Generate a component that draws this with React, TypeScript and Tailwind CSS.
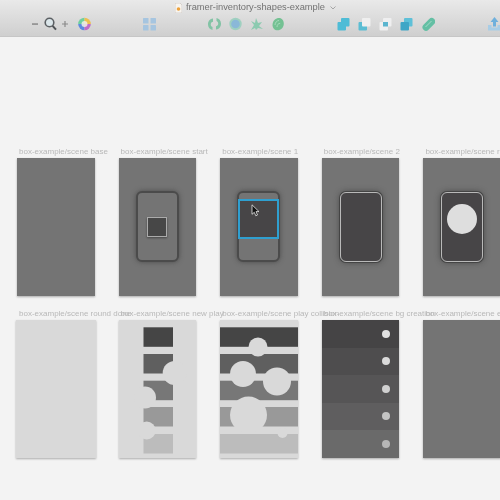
import React from "react";

const Icon = ({ w, ml, children }: { w: number; ml: number; children: React.ReactNode }) => (
  <svg width={w} height={14} viewBox={`0 0 ${w} 14`} style={{ marginLeft: ml }} className="shrink-0">
    {children}
  </svg>
);

const Stack = ({ a, b, front }: { a: string; b: string; front: "a" | "b" }) => {
  const A = <rect x="0.5" y="5" width="8.5" height="8.5" rx="1" fill={a} />;
  const B = <rect x="4" y="1" width="8.5" height="8.5" rx="1" fill={b} />;
  return front === "a" ? <>{B}{A}</> : <>{A}{B}</>;
};

function Toolbar() {
  return (
    <div className="h-[37px] border-b border-[#c6c6c6] bg-gradient-to-b from-[#e9e9e9] to-[#cfcfcf] flex flex-col shrink-0">
      <div className="h-[15px] pl-[175px] flex items-center gap-[4px] text-[9.3px] text-[#737373]">
        <svg width="7" height="10" viewBox="0 0 7 10" className="shrink-0">
          <path d="M0 0h5l2 2v8H0z" fill="#f7f4ef" stroke="#c4beb8" strokeWidth="0.6" />
          <circle cx="3.5" cy="6" r="1.8" fill="#eda23c" />
        </svg>
        <span className="whitespace-nowrap">framer-inventory-shapes-example</span>
        <svg width="6" height="4" viewBox="0 0 6 4" className="ml-[1px]">
          <path d="M0.5 0.5 3 3l2.5-2.5" fill="none" stroke="#a5a5a5" />
        </svg>
      </div>
      <div className="h-[17px] flex items-center">
        <Icon w={6} ml={32}><rect x="0" y="6.4" width="6" height="1.3" fill="#7c7c7c" /></Icon>
        <Icon w={13} ml={6}>
          <circle cx="5.5" cy="5.5" r="4.3" fill="#dbe6ea" stroke="#5c6064" strokeWidth="1.6" />
          <path d="M8.6 8.8 12 12.6" stroke="#4f5356" strokeWidth="2" />
        </Icon>
        <Icon w={6} ml={5}><path d="M0 7h6M3 4v6" stroke="#8a8a8a" strokeWidth="1.2" /></Icon>
        <Icon w={13} ml={10}>
          <path d="M6.5 7 L6.5 .7 A6.3 6.3 0 0 0 .2 7z" fill="#6fd0a0" />
          <path d="M6.5 7 L.2 7 A6.3 6.3 0 0 0 6.5 13.3z" fill="#5e8ae0" />
          <path d="M6.5 7 L6.5 13.3 A6.3 6.3 0 0 0 12.8 7z" fill="#c06cc8" />
          <path d="M6.5 7 L12.8 7 A6.3 6.3 0 0 0 6.5 .7z" fill="#eec050" />
          <circle cx="6.5" cy="7" r="3" fill="#f1efe7" opacity=".85" />
        </Icon>
        <Icon w={13} ml={52}>
          <rect x="0" y="1" width="5.5" height="5.5" rx=".6" fill="#a6c5e0" />
          <rect x="7.5" y="1" width="5.5" height="5.5" rx=".6" fill="#a6c5e0" />
          <rect x="0" y="8" width="5.5" height="5.5" rx=".6" fill="#a6c5e0" />
          <rect x="7.5" y="8" width="5.5" height="5.5" rx=".6" fill="#a6c5e0" />
        </Icon>
        <Icon w={15} ml={51}>
          <path d="M6 1.5C2 2 1 5 1 7.5c0 3 2 5 4.5 5.5V10C4.2 9.5 3.6 8.500 3.800 7 4 5.500 5 5 6 4.800z" fill="#82c3a5" />
          <path d="M9 12.500c4-.5 5-3.500 5-6 0-3-2-5-4.500-5.500V4c1.300.5 1.900 1.500 1.700 3-.2 1.500-1.200 2-2.200 2.200z" fill="#82c3a5" />
        </Icon>
        <Icon w={13} ml={7}>
          <circle cx="6.500" cy="7" r="6.200" fill="#9fd0c0" />
          <circle cx="6.500" cy="7" r="4.300" fill="#8ab8d8" />
        </Icon>
        <Icon w={13} ml={8}>
          <path d="M1 13 4 8 1 4l4 2 1-5 2 5 4-1-3 4 4 3-5-1-2 2-1-2z" fill="#8ccab0" />
        </Icon>
        <Icon w={12} ml={9}>
          <path d="M.5 8C.5 3.500 4 1 7 1c3 0 4.800 2.500 4.800 5.500 0 4-3 6.800-6.300 6.800C2.500 13.300.5 11 .5 8z" fill="#74c193" />
          <path d="M3 8c0-2.500 2-4.500 4-4.500M5 10c0-2 1.200-3.700 3.200-3.700" fill="none" stroke="#a6dcbc" strokeWidth="1" />
        </Icon>
        <Icon w={13} ml={53}><Stack a="#4fbcd6" b="#4fbcd6" front="a" /></Icon>
        <Icon w={13} ml={8}><Stack a="#5bbdd3" b="#efefef" front="b" /></Icon>
        <Icon w={13} ml={8}><Stack a="#efeff0" b="#efeff0" front="a" /><rect x="4" y="5" width="5" height="4.500" fill="#5bb5cf" /></Icon>
        <Icon w={13} ml={8}><Stack a="#3fa6c6" b="#5ec0d8" front="a" /></Icon>
        <Icon w={13} ml={9}>
          <rect x="-1" y="4" width="15" height="7" rx="3.500" fill="#64bfa4" transform="rotate(-45 6.500 7)" />
          <path d="M3.500 10 9.500 4" stroke="#a4dcc8" strokeWidth="1" />
        </Icon>
        <Icon w={13} ml={53}>
          <path d="M6.500 0 10.500 5H8V9.500H5V5H2.500z" fill="#6fb0dc" />
          <path d="M0 8h3.500v2.500h6V8H13v5.500H0z" fill="#a8cde6" />
        </Icon>
      </div>
    </div>
  );
}

const Card = ({ label, className, children }: { label: string; className: string; children?: React.ReactNode }) => (
  <div className="w-[77.6px] shrink-0 flex flex-col gap-[1px]">
    <div className="h-[10px] leading-[10px] pl-[2px] text-[8px] text-[#b8b8b8] whitespace-nowrap">{label}</div>
    <div className={`h-[137.6px] shadow-[0_1px_2px_rgba(0,0,0,0.3)] overflow-hidden ${className}`}>{children}</div>
  </div>
);

const darkPhone = "w-[43px] h-[71px] rounded-[6px] border-2 border-[#4b4b4b] bg-[#747474] shadow-[0_0_5px_rgba(50,50,50,0.6)]";
const litPhone = "w-[42px] h-[70px] rounded-[6px] border-[1.5px] border-[#b9b9b9] bg-[#474547] shadow-[0_0_0_1px_#444,0_0_6px_rgba(40,40,40,0.65)]";

const bars = ["#454545", "#5f5f5f", "#777777", "#999999", "#bcbcbc"];
const barY = [7.3, 34, 60.7, 87, 114];

function Row1() {
  const base = "bg-[#747474] flex items-center justify-center";
  return (
    <div className="flex gap-[24px] pl-[17px] w-[620px]">
      <Card label="box-example/scene base" className={base} />
      <Card label="box-example/scene start" className={base}>
        <div className={`${darkPhone} flex items-center justify-center`}>
          <div className="w-[20px] h-[20px] bg-[#474747] border border-[#ababab] shadow-[0_1px_2px_rgba(0,0,0,0.4)]" />
        </div>
      </Card>
      <Card label="box-example/scene 1" className={base}>
        <div className={`${darkPhone} pt-[6px]`}>
          <div className="relative h-[40px] -mx-[1px] bg-[#474547] border-2 border-[#2f9fd0]">
            <svg width="9" height="13" viewBox="0 0 9 13" className="absolute left-[11px] top-[3px]">
              <path d="M1 .8v9.500l2.300-2 1.500 3.500 1.700-.8L5 7.600h3z" fill="#111" stroke="#e8e8e8" strokeWidth=".8" />
            </svg>
          </div>
        </div>
      </Card>
      <Card label="box-example/scene 2" className={base}>
        <div className={litPhone} />
      </Card>
      <Card label="box-example/scene round" className={base}>
        <div className={`${litPhone} flex justify-center pt-[11px]`}>
          <div className="w-[30px] h-[30px] rounded-full bg-[#dedede]" />
        </div>
      </Card>
    </div>
  );
}

function NewPlay() {
  return (
    <svg width="78" height="138" viewBox="0 0 78 138" className="block">
      {bars.map((c, i) => (
        <rect key={c} x="24.500" y={barY[i]} width="29.500" height="19.500" fill={c} />
      ))}
      <g fill="#d9d9d9">
        <circle cx="55.700" cy="53" r="12" />
        <circle cx="26" cy="77.500" r="11" />
        <circle cx="27.700" cy="110.500" r="9" />
      </g>
    </svg>
  );
}

function PlayCollision() {
  return (
    <svg width="78" height="138" viewBox="0 0 78 138" className="block">
      {bars.map((c, i) => (
        <rect key={c} x="0" y={barY[i]} width="78" height="19.500" fill={c} />
      ))}
      <g fill="#d9d9d9">
        <circle cx="38" cy="27" r="9.500" />
        <circle cx="23" cy="54" r="13" />
        <circle cx="57" cy="61.500" r="14" />
        <circle cx="28.500" cy="95" r="18.500" />
        <circle cx="62.500" cy="113" r="5" />
      </g>
    </svg>
  );
}

function Row2() {
  const bands = [
    ["#454445", "#e2e2e2"],
    ["#4e4d4e", "#dadada"],
    ["#565556", "#d0d0d0"],
    ["#5f5e5f", "#c4c4c4"],
    ["#6a6a6a", "#b6b6b6"],
  ];
  return (
    <div className="flex gap-[24px] pl-[17px] w-[620px]">
      <Card label="box-example/scene round done" className="bg-[#d9d9d9] -mx-[1px]" />
      <Card label="box-example/scene new play" className="bg-[#d9d9d9]"><NewPlay /></Card>
      <Card label="box-example/scene play collision" className="bg-[#d9d9d9]"><PlayCollision /></Card>
      <Card label="box-example/scene bg creation" className="flex flex-col">
        {bands.map(([bg, dot]) => (
          <div key={bg} className="flex-1 flex items-center justify-end pr-[9.500px]" style={{ background: bg }}>
            <div className="w-[8px] h-[8px] rounded-full" style={{ background: dot }} />
          </div>
        ))}
      </Card>
      <Card label="box-example/scene end" className="bg-[#747474]" />
    </div>
  );
}

export default function App() {
  return (
    <div className="w-[500px] h-[500px] overflow-hidden bg-[#f3f3f3] flex flex-col blur-[0.6px] font-['Liberation_Sans',sans-serif]">
      <Toolbar />
      <div className="pt-[110px] flex flex-col gap-[13.4px]">
        <Row1 />
        <Row2 />
      </div>
    </div>
  );
}
